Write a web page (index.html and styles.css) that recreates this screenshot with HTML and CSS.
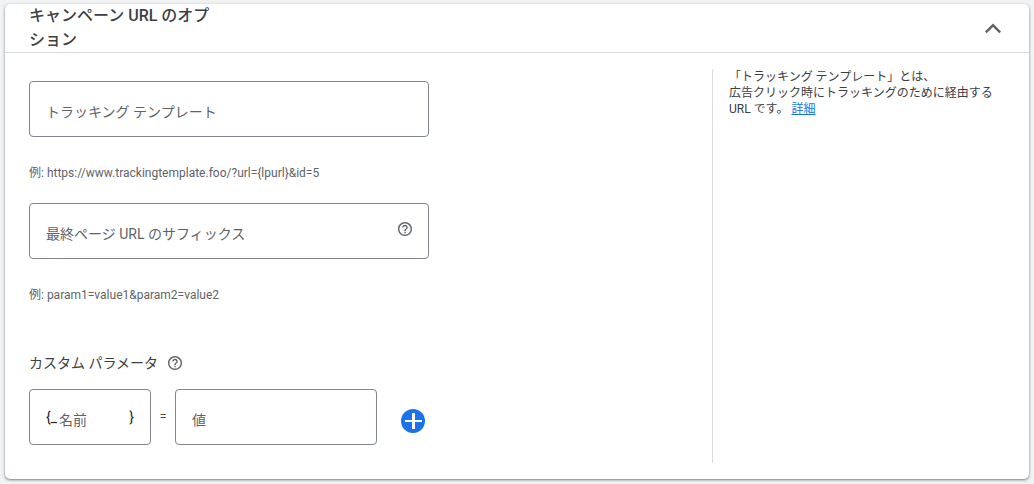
FILE: index.html
```html
<!DOCTYPE html>
<html lang="ja">
<head>
<meta charset="utf-8">
<meta name="viewport" content="width=device-width, initial-scale=1">
<title>キャンペーン URL のオプション</title>
<link rel="stylesheet" href="styles.css">
</head>
<body>
<svg class="sprite" aria-hidden="true">
  <symbol id="help" viewBox="2 2 20 20"><path d="M11 18h2v-2h-2v2zm1-16C6.48 2 2 6.48 2 12s4.480 10 10 10 10-4.480 10-10S17.520 2 12 2zm0 18c-4.410 0-8-3.590-8-8s3.590-8 8-8 8 3.590 8 8-3.590 8-8 8zm0-14c-2.210 0-4 1.790-4 4h2c0-1.100.9-2 2-2s2 .9 2 2c0 2-3 1.750-3 5h2c0-2.250 3-2.500 3-5 0-2.210-1.790-4-4-4z"/></symbol>
</svg>
<section class="card">
  <header class="card-header">
    <h2 class="card-title">キャンペーン URL のオプション</h2>
    <button class="icon-button" type="button" aria-label="折りたたむ" aria-expanded="true">
      <svg class="icon-chevron" viewBox="0 0 24 24"><path d="M4 15.500l8-8 8 8-1.700 1.700-6.300-6.300-6.300 6.300z"/></svg>
    </button>
  </header>
  <div class="card-body">
    <form class="form">
      <div class="group">
        <div class="field">
          <input class="input" id="template" type="text" placeholder="トラッキング テンプレート" aria-label="トラッキング テンプレート" aria-describedby="template-hint">
        </div>
        <p class="hint" id="template-hint">例: https://www.trackingtemplate.foo/?url={lpurl}&amp;id=5</p>
      </div>
      <div class="group">
        <div class="field">
          <input class="input" id="suffix" type="text" placeholder="最終ページ URL のサフィックス" aria-label="最終ページ URL のサフィックス" aria-describedby="suffix-hint">
          <button class="icon-button field-help" type="button" aria-label="ヘルプ"><svg class="icon-help"><use href="#help"/></svg></button>
        </div>
        <p class="hint" id="suffix-hint">例: param1=value1&amp;param2=value2</p>
      </div>
      <fieldset class="params">
        <legend class="params-title">カスタム パラメータ
          <button class="icon-button" type="button" aria-label="ヘルプ"><svg class="icon-help"><use href="#help"/></svg></button>
        </legend>
        <div class="params-row">
          <div class="field field-name">
            <span class="brace">{_</span>
            <input class="input" type="text" placeholder="名前" aria-label="名前">
            <span class="brace">}</span>
          </div>
          <span class="equals">=</span>
          <div class="field field-value">
            <input class="input" type="text" placeholder="値" aria-label="値">
          </div>
          <button class="icon-button add" type="button" aria-label="パラメータを追加">
            <svg class="icon-add" viewBox="0 0 24 24"><circle cx="12" cy="12" r="12"/><path d="M11 4h3v7h7v2h-7v7h-3v-7H4v-2h7z"/></svg>
          </button>
        </div>
      </fieldset>
    </form>
    <aside class="help">
      <p class="help-text">「トラッキング テンプレート」とは、<br>広告クリック時にトラッキングのために経由する URL です。 <a class="link" href="#">詳細</a></p>
    </aside>
  </div>
</section>
</body>
</html>
```
FILE: styles.css
```css
* {
  box-sizing: border-box;
}

body {
  margin: 0;
  padding: 4px 5px 5px;
  background: #f1f3f4;
  color: #3c4043;
  font-family: Roboto, "Noto Sans CJK JP", sans-serif;
  font-size: 14px;
  line-height: 20px;
}

.sprite {
  position: absolute;
  width: 0;
  height: 0;
}

.card {
  background: #fff;
  border-radius: 5px;
  box-shadow: 0 1px 2px rgba(60, 64, 67, 0.5), 0 1px 3px 1px rgba(60, 64, 67, 0.15);
}

.card-header {
  display: flex;
  align-items: center;
  justify-content: space-between;
  padding: 0 24px;
  border-bottom: 1px solid #dadce0;
}

.card-title {
  width: 192px;
  margin: 0;
  font-size: 16px;
  font-weight: 500;
  line-height: 24px;
}

.icon-button {
  display: flex;
  flex: none;
  padding: 0;
  border: 0;
  background: none;
  color: #5f6368;
  cursor: pointer;
}

.icon-button svg {
  fill: currentColor;
}

.icon-chevron {
  width: 24px;
  height: 24px;
}

.icon-help {
  width: 14px;
  height: 14px;
}

.card-body {
  display: flex;
  padding: 16px 24px;
}

.form {
  flex: 1;
  padding-top: 12px;
}

.group {
  max-width: 400px;
  margin-bottom: 20px;
}

.field {
  display: flex;
  align-items: center;
  height: 56px;
  padding: 0 16px;
  border: 1px solid #80868b;
  border-radius: 4px;
}

.field-help {
  padding-bottom: 4px;
}

.input {
  flex: 1;
  min-width: 0;
  height: 100%;
  padding: 6px 0 0;
  border: 0;
  outline: 0;
  background: none;
  color: inherit;
  font: inherit;
}

.input::placeholder {
  color: #5f6368;
  opacity: 1;
}

.hint {
  margin: 26px 0 0;
  color: #5f6368;
  font-size: 12px;
}

.params {
  margin: 46px 0 0;
  padding: 0;
  border: 0;
}

.params-title {
  display: flex;
  align-items: center;
  gap: 10px;
  padding: 2px 0 0;
}

.params-row {
  display: flex;
  align-items: center;
  gap: 8px;
  padding: 16px 0 18px;
}

.field-name {
  gap: 2px;
  width: 122px;
}

.field-value {
  width: 202px;
}

.brace {
  color: #202124;
}

.equals {
  width: 8px;
  font-size: 12px;
  text-align: center;
}

.add {
  margin-top: 8px;
  margin-left: 16px;
  color: #1a73e8;
}

.icon-add {
  width: 24px;
  height: 24px;
}

.icon-add path {
  fill: #fff;
}

.help {
  width: 293px;
  padding: 0 0 0 16px;
  border-left: 1px solid #dadce0;
}

.help-text {
  margin: 0;
  font-size: 12px;
  line-height: 16px;
}

.link {
  color: #1a73e8;
  text-decoration: underline;
}
```
